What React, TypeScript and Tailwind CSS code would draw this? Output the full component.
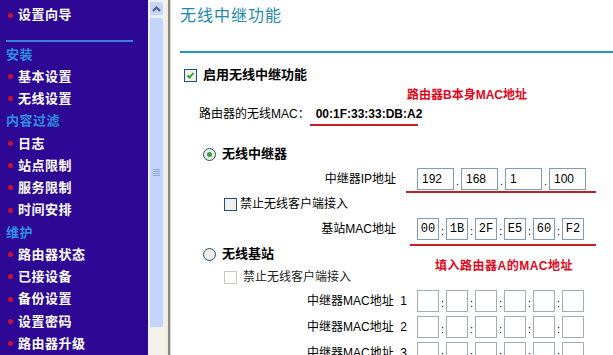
import React from "react";

const font = { fontFamily: '"Liberation Sans", "Noto Sans CJK SC", sans-serif' };

type NavItem = { label: string; heading?: boolean };

const navItems: NavItem[] = [
  { label: "安装", heading: true },
  { label: "基本设置" },
  { label: "无线设置" },
  { label: "内容过滤", heading: true },
  { label: "日志" },
  { label: "站点限制" },
  { label: "服务限制" },
  { label: "时间安排" },
  { label: "维护", heading: true },
  { label: "路由器状态" },
  { label: "已接设备" },
  { label: "备份设置" },
  { label: "设置密码" },
  { label: "路由器升级" },
];

const NavLink = ({ label }: { label: string }) => (
  <div className="flex h-[22.25px] items-center">
    <span className="ml-[8px] h-[5px] w-[5px] rounded-full bg-[#cc1034]" />
    <span className="ml-[5px] text-[13px] font-bold tracking-[0.5px] text-white">{label}</span>
  </div>
);

const Sidebar = () => (
  <div className="h-full w-[148px] shrink-0 overflow-hidden bg-[#2c0894] pt-[4px]">
    <NavLink label="设置向导" />
    <div className="ml-[6px] mt-[14px] h-[2px] w-[127px] bg-[#3a7fdc]" />
    <div className="mt-[1px]">
      {navItems.map((item) =>
        item.heading ? (
          <div key={item.label} className="flex h-[22.25px] items-center pl-[6px] text-[13px] font-bold tracking-[0.5px] text-[#2f8fe2]">
            {item.label}
          </div>
        ) : (
          <NavLink key={item.label} label={item.label} />
        ),
      )}
    </div>
  </div>
);

const Scrollbar = () => (
  <div className="h-full w-[17px] shrink-0 bg-[#f4f2e8] pt-[1px]">
    <div className="mx-[1px] flex h-[15px] items-center justify-center rounded-[2px] border border-[#eef3ff] bg-[#c6d6f9]">
      <svg width="9" height="6" viewBox="0 0 9 6">
        <path d="M1 5 L4.5 1.5 L8 5" stroke="#4d6185" strokeWidth="2" fill="none" />
      </svg>
    </div>
    <div className="mx-[1px] mt-[1px] flex h-[311px] items-center justify-center rounded-[2px] border border-[#e8efff] bg-[#c3d5fa]">
      <div className="flex flex-col gap-[1px]">
        <div className="h-[1px] w-[7px] bg-[#8fa8d8]" />
        <div className="h-[1px] w-[7px] bg-[#8fa8d8]" />
        <div className="h-[1px] w-[7px] bg-[#8fa8d8]" />
        <div className="h-[1px] w-[7px] bg-[#8fa8d8]" />
      </div>
    </div>
  </div>
);

const CheckBox = ({ checked, disabled }: { checked?: boolean; disabled?: boolean }) => (
  <span
    className={`flex h-[13px] w-[13px] shrink-0 items-center justify-center border ${
      disabled ? "border-[#cac8bb] bg-white" : "border-[#1c5180] bg-[#f0f0ea]"
    }`}
  >
    {checked && (
      <svg width="9" height="9" viewBox="0 0 9 9">
        <path d="M1.5 4.5 L3.5 6.5 L7.5 2" stroke="#21a121" strokeWidth="1.8" fill="none" />
      </svg>
    )}
  </span>
);

const Radio = ({ checked }: { checked?: boolean }) => (
  <span className="flex h-[13px] w-[13px] shrink-0 items-center justify-center rounded-full border border-[#1c5180] bg-[#eeeee6]">
    {checked && <span className="h-[5px] w-[5px] rounded-full bg-[#3ca03c]" />}
  </span>
);

const RedLine = ({ left, width }: { left: string; width: string }) => (
  <div className={`${left} ${width} h-[2px] bg-[#c41e26]`} />
);

const IpField = ({ value }: { value: string }) => (
  <span className="flex h-[22px] w-[37px] items-center border border-[#7f9db9] bg-white pl-[4px] text-[12px]">
    {value}
  </span>
);

const MacField = ({ value, disabled }: { value?: string; disabled?: boolean }) => (
  <span
    className={`flex h-[22px] w-[22px] items-center justify-center border bg-white text-[12px] ${
      disabled ? "border-[#a5acb2]" : "border-[#7f9db9]"
    }`}
    style={{ fontFamily: '"Liberation Mono", monospace' }}
  >
    {value}
  </span>
);

const Sep = ({ char }: { char: string }) => (
  <span className="flex w-[7px] items-end justify-center pb-[3px] text-[11px] leading-none">{char}</span>
);

const MacRow = ({ values, disabled }: { values: string[]; disabled?: boolean }) => (
  <div className="flex h-[22px]">
    {values.map((v, i) => (
      <React.Fragment key={i}>
        {i > 0 && <Sep char=":" />}
        <MacField value={v} disabled={disabled} />
      </React.Fragment>
    ))}
  </div>
);

const Content = () => (
  <div className="h-full flex-1 overflow-hidden bg-white pl-[9px] text-black" style={font}>
    <div className="flex h-[32px] items-center text-[16px] tracking-[1px] text-[#1f8aac]">无线中继功能</div>
    <div className="mt-[19px] h-[2px] bg-[#1d97c9]" />

    <div className="mt-[12px] flex h-[20px] items-center pl-[4px]">
      <CheckBox checked />
      <span className="ml-[6px] text-[13px] font-bold">启用无线中继功能</span>
    </div>
    <div className="flex h-[20px] items-center pl-[227px] text-[12px] font-bold text-[#e0081c]">路由器B本身MAC地址</div>
    <div className="flex h-[18px] items-center pl-[19px] text-[12px]">
      <span>路由器的无线MAC：</span>
      <span className="ml-[6px] font-bold">00:1F:33:33:DB:A2</span>
    </div>
    <div className="pt-[1px]">
      <RedLine left="ml-[130px]" width="w-[108px]" />
    </div>

    <div className="mt-[18px] flex h-[20px] items-center pl-[23px]">
      <Radio checked />
      <span className="ml-[6px] text-[13px] font-bold">无线中继器</span>
    </div>
    <div className="mt-[4px] flex h-[22px] items-center">
      <span className="w-[216px] text-right text-[12px]">中继器IP地址</span>
      <div className="ml-[21px] flex h-[22px]">
        <IpField value="192" />
        <Sep char="." />
        <IpField value="168" />
        <Sep char="." />
        <IpField value="1" />
        <Sep char="." />
        <IpField value="100" />
      </div>
    </div>
    <div className="pt-[1px]">
      <RedLine left="ml-[226px]" width="w-[190px]" />
    </div>
    <div className="mt-[1px] flex h-[20px] items-center pl-[44px]">
      <CheckBox />
      <span className="ml-[3px] text-[12px]">禁止无线客户端接入</span>
    </div>
    <div className="mt-[4px] flex h-[22px] items-center">
      <span className="w-[216px] text-right text-[12px]">基站MAC地址</span>
      <div className="ml-[21px]">
        <MacRow values={["00", "1B", "2F", "E5", "60", "F2"]} />
      </div>
    </div>
    <div className="pt-[4px]">
      <RedLine left="ml-[230px]" width="w-[186px]" />
    </div>

    <div className="flex h-[23px] items-start">
      <div className="flex h-[16px] items-center pl-[23px]">
        <Radio />
        <span className="ml-[6px] text-[13px] font-bold">无线基站</span>
      </div>
      <span className="ml-[161px] mt-[12px] text-[12px] font-bold leading-[16px] tracking-[0.5px] text-[#e0081c]">
        填入路由器A的MAC地址
      </span>
    </div>
    <div className="flex h-[16px] items-center pl-[44px]">
      <CheckBox disabled />
      <span className="ml-[6px] text-[12px] text-[#222]">禁止无线客户端接入</span>
    </div>
    {["1", "2", "3"].map((n, i) => (
      <div key={n} className={`${i === 0 ? "mt-[5px]" : "mt-[4px]"} flex h-[22px] items-center`}>
        <span className="w-[227px] text-right text-[12px]">中继器MAC地址&nbsp;&nbsp;{n}</span>
        <div className="ml-[10px]">
          <MacRow values={["", "", "", "", "", ""]} disabled />
        </div>
      </div>
    ))}
  </div>
);

export default function App() {
  return (
    <div className="flex h-[355px] w-[613px] overflow-hidden" style={font}>
      <Sidebar />
      <Scrollbar />
      <div className="h-full w-[3px] shrink-0 bg-[#f0eee2]" />
      <div className="h-full w-[2px] shrink-0 bg-[#8a8a84]" />
      <div className="h-full w-[1px] shrink-0 bg-[#d8d8d0]" />
      <Content />
    </div>
  );
}
